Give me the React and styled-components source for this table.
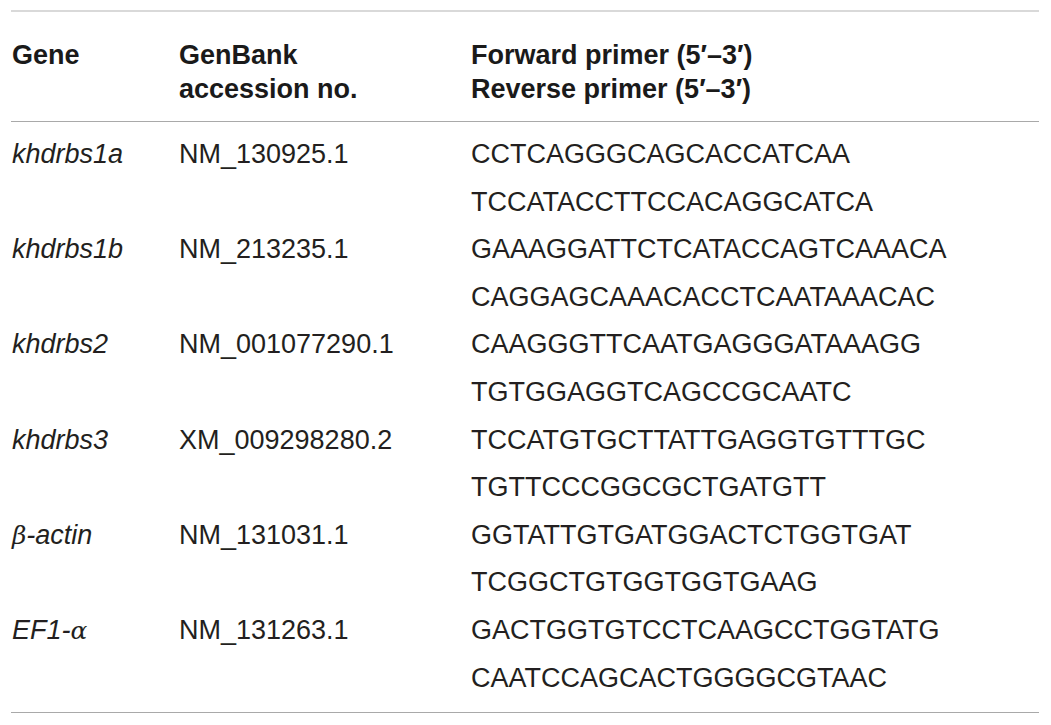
import React from "react";
import styled, { createGlobalStyle } from "styled-components";

const Global = createGlobalStyle`
  html, body { margin: 0; padding: 0; background: #fff; }
  body { font-family: "Liberation Sans", Arial, sans-serif; color: #231f20; }
`;

const Page = styled.div`
  width: 1051px;
  height: 725px;
  padding: 10px 12px 0 11px;
  box-sizing: border-box;
`;

const Table = styled.div`
  border-top: 2px solid #d9d9d9;
  border-bottom: 1px solid #a9a9a9;
`;

const Row = styled.div`
  display: grid;
  grid-template-columns: 167px 292px 1fr;
  padding-left: 1px;
`;

const Head = styled(Row)`
  padding-top: 26px;
  padding-bottom: 15px;
  border-bottom: 1px solid #a9a9a9;
  font-weight: 700;
  font-size: 27px;
  line-height: 34px;
  color: #1a1a1a;
`;

const Body = styled.div`
  padding: 9px 0 10px;
  font-size: 27px;
  line-height: 47.6px;
  color: #231f20;
`;

const Cell = styled.div`
  white-space: nowrap;
  font-style: ${(p) => (p.$italic ? "italic" : "normal")};
`;

const Greek = styled.span`
  font-family: "DejaVu Serif", "Liberation Serif", serif;
  font-style: italic;
  font-size: 0.92em;
`;

const rows = [
  { gene: "khdrbs1a", acc: "NM_130925.1", f: "CCTCAGGGCAGCACCATCAA", r: "TCCATACCTTCCACAGGCATCA" },
  { gene: "khdrbs1b", acc: "NM_213235.1", f: "GAAAGGATTCTCATACCAGTCAAACA", r: "CAGGAGCAAACACCTCAATAAACAC" },
  { gene: "khdrbs2", acc: "NM_001077290.1", f: "CAAGGGTTCAATGAGGGATAAAGG", r: "TGTGGAGGTCAGCCGCAATC" },
  { gene: "khdrbs3", acc: "XM_009298280.2", f: "TCCATGTGCTTATTGAGGTGTTTGC", r: "TGTTCCCGGCGCTGATGTT" },
  { gene: <><Greek>β</Greek>-actin</>, acc: "NM_131031.1", f: "GGTATTGTGATGGACTCTGGTGAT", r: "TCGGCTGTGGTGGTGAAG" },
  { gene: <>EF1-<Greek>α</Greek></>, acc: "NM_131263.1", f: "GACTGGTGTCCTCAAGCCTGGTATG", r: "CAATCCAGCACTGGGGCGTAAC" },
];

export default function App() {
  return (
    <Page>
      <Global />
      <Table>
        <Head>
          <Cell>Gene</Cell>
          <Cell>GenBank<br />accession no.</Cell>
          <Cell>Forward primer (5′–3′)<br />Reverse primer (5′–3′)</Cell>
        </Head>
        <Body>
          {rows.map((r, i) => (
            <Row key={i}>
              <Cell $italic>{r.gene}</Cell>
              <Cell>{r.acc}</Cell>
              <Cell>
                <div>{r.f}</div>
                <div>{r.r}</div>
              </Cell>
            </Row>
          ))}
        </Body>
      </Table>
    </Page>
  );
}
